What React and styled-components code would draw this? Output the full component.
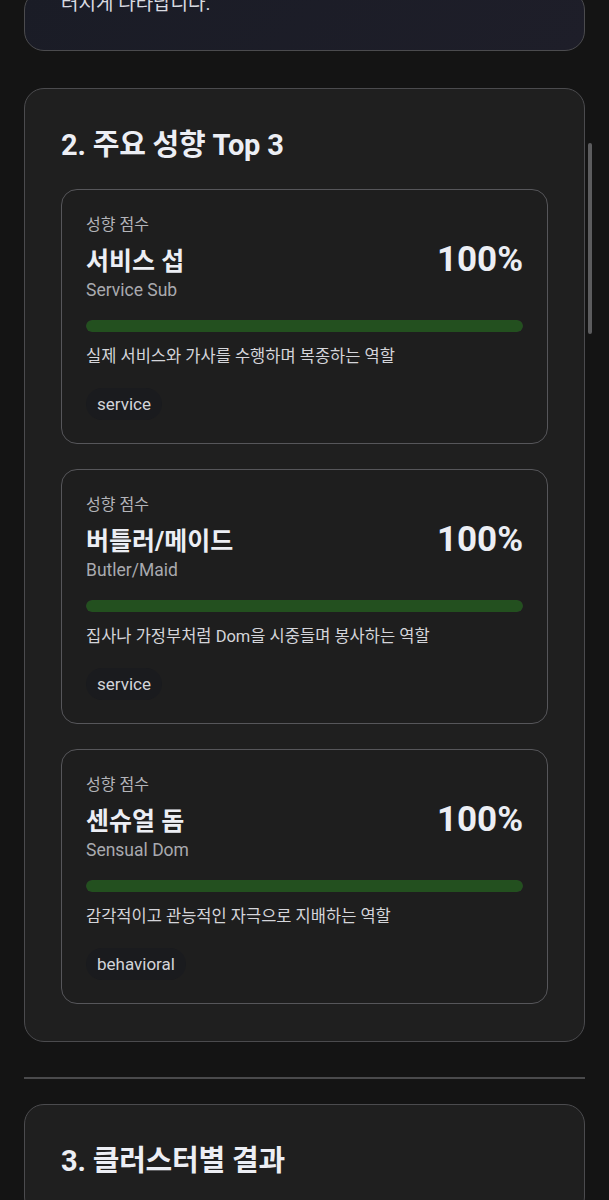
import React from "react";
import styled, { createGlobalStyle } from "styled-components";

const GlobalStyle = createGlobalStyle`
  html, body {
    margin: 0;
    padding: 0;
    background: #141414;
  }
  body {
    font-family: "Roboto", "Noto Sans CJK KR", sans-serif;
    color: #eceef4;
    overflow: hidden;
  }
  * {
    box-sizing: border-box;
  }
`;

const Page = styled.div`
  display: flex;
  flex-direction: column;
  padding: 0 24px 40px;
`;

const Card = styled.section`
  background: ${(p) =>
    p.tinted ? "linear-gradient(135deg, #1a1c26 0%, #1e1e29 100%)" : "#1f1f1f"};
  border: 1px solid #4b4b4e;
  border-radius: 20px;
  padding: 38px 36px 37px;
  margin-top: ${(p) => p.offset || "0"};
`;

const IntroCard = styled(Card)`
  margin-top: -10px;
  padding: 0 36px 33px;
`;

const IntroText = styled.p`
  margin: 0;
  font-size: 19px;
  line-height: 26px;
  color: #d9dae0;
`;

const SectionTitle = styled.h2`
  margin: 0;
  font-size: 29px;
  line-height: 36px;
  font-weight: 700;
  color: #eceef4;
  letter-spacing: -0.2px;
`;

const List = styled.div`
  display: flex;
  flex-direction: column;
  gap: 25px;
  margin-top: 26px;
`;

const TraitCard = styled.article`
  border: 1px solid #56565a;
  border-radius: 16px;
  background: #1e1e1e;
  padding: 25px 24px 23px;
  display: flex;
  flex-direction: column;
`;

const Label = styled.div`
  font-size: 16px;
  line-height: 20px;
  color: #b3b4b9;
`;

const TitleRow = styled.div`
  display: flex;
  align-items: center;
  justify-content: space-between;
  margin-top: 4px;
  height: 40px;
`;

const TraitName = styled.h3`
  margin: 0;
  font-size: 25px;
  font-weight: 700;
  color: #eceef4;
`;

const Score = styled.div`
  font-size: 35px;
  font-weight: 700;
  color: #eceef4;
`;

const English = styled.div`
  font-size: 17.5px;
  line-height: 22px;
  color: #a9aaaf;
`;

const Track = styled.div`
  margin-top: 19px;
  height: 12px;
  border-radius: 6px;
  background: #2a2a2c;
  overflow: hidden;
`;

const Fill = styled.div`
  height: 100%;
  border-radius: 6px;
  background: #23501f;
`;

const Desc = styled.p`
  margin: 14px 0 0;
  font-size: 16.5px;
  line-height: 22px;
  color: #d4d5da;
`;

const Tag = styled.span`
  align-self: flex-start;
  margin-top: 20px;
  padding: 0 11px;
  height: 32px;
  display: inline-flex;
  align-items: center;
  border-radius: 16px;
  background: #1a1b1e;
  font-size: 17px;
  color: #d3d4d9;
`;

const Divider = styled.hr`
  margin: 35px 0 25px;
  border: none;
  height: 2px;
  background: #4a4a4c;
`;

const ScrollThumb = styled.div`
  position: fixed;
  right: 17px;
  top: 143px;
  width: 4px;
  height: 191px;
  border-radius: 2px;
  background: #5c5c5e;
`;

const traits = [
  {
    name: "서비스 섭",
    en: "Service Sub",
    score: 100,
    desc: "실제 서비스와 가사를 수행하며 복종하는 역할",
    tag: "service",
  },
  {
    name: "버틀러/메이드",
    en: "Butler/Maid",
    score: 100,
    desc: "집사나 가정부처럼 Dom을 시중들며 봉사하는 역할",
    tag: "service",
  },
  {
    name: "센슈얼 돔",
    en: "Sensual Dom",
    score: 100,
    desc: "감각적이고 관능적인 자극으로 지배하는 역할",
    tag: "behavioral",
  },
];

const App = () => {
  return (
    <>
      <GlobalStyle />
      <Page>
        <IntroCard tinted>
          <IntroText>러지게 나타납니다.</IntroText>
        </IntroCard>

        <Card offset="37px">
          <SectionTitle>2. 주요 성향 Top 3</SectionTitle>
          <List>
            {traits.map((t) => (
              <TraitCard key={t.en}>
                <Label>성향 점수</Label>
                <TitleRow>
                  <TraitName>{t.name}</TraitName>
                  <Score>{t.score}%</Score>
                </TitleRow>
                <English>{t.en}</English>
                <Track>
                  <Fill style={{ width: `${t.score}%` }} />
                </Track>
                <Desc>{t.desc}</Desc>
                <Tag>{t.tag}</Tag>
              </TraitCard>
            ))}
          </List>
        </Card>

        <Divider />

        <Card>
          <SectionTitle>3. 클러스터별 결과</SectionTitle>
        </Card>
      </Page>
      <ScrollThumb />
    </>
  );
};

export default App;
